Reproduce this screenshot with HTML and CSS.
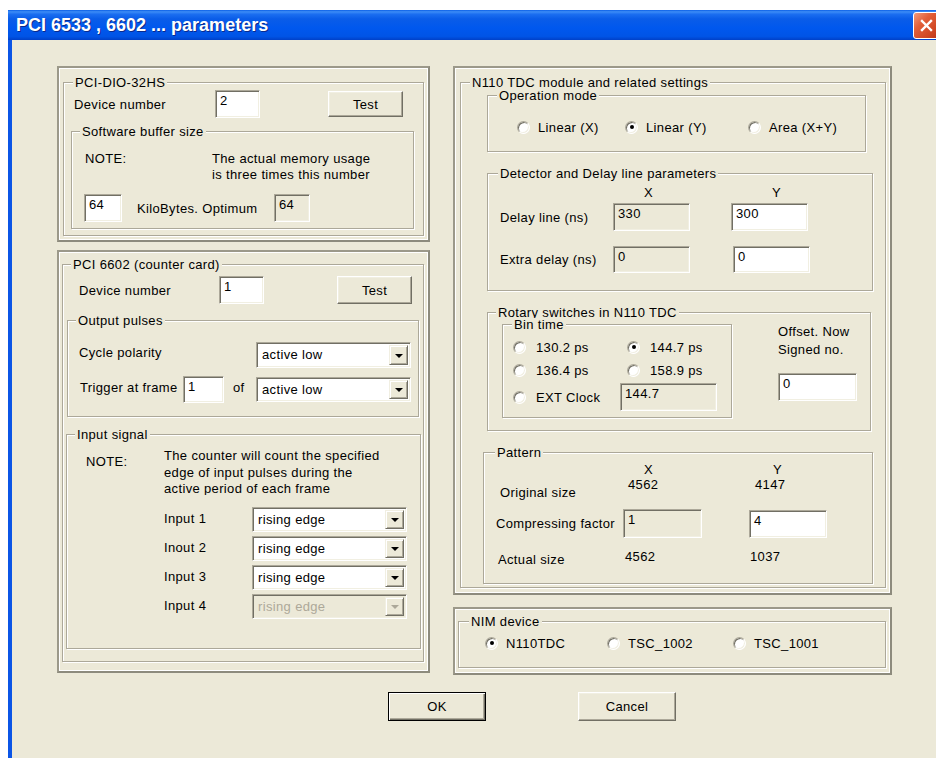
FILE: index.html
```html
<!DOCTYPE html>
<html lang="en">
<head>
<meta charset="utf-8">
<title>PCI 6533 , 6602 ... parameters</title>
<link rel="stylesheet" href="styles.css">
</head>
<body>
<div class="window">
  <div class="titlebar">
    <span class="title">PCI 6533 , 6602 ... parameters</span>
    <span class="close" role="button" aria-label="Close">
      <svg width="15" height="15" viewBox="0 0 15 15"><path d="M3 3L12 12M12 3L3 12" stroke="#fff" stroke-width="2.4" stroke-linecap="square"/></svg>
    </span>
  </div>

  <div class="client">
    <div class="columns">
      <!-- left column: digital I/O card and counter card -->
      <div class="col col-left">
        <div class="frame frame-dio">
          <div class="group g-dio">
            <div class="cap">PCI-DIO-32HS</div>
            <div class="row dio-dev">
              <span class="lbl">Device number</span>
              <span class="edit w45">2</span>
              <span class="btn dio-test">Test</span>
            </div>
            <div class="group g-buf">
              <div class="cap">Software buffer size</div>
              <div class="note buf-note">
                <span class="note-key">NOTE:</span>
                <span class="note-text">The actual memory usage<br>is three times this number</span>
              </div>
              <div class="row buf-row">
                <span class="edit buf-kb">64</span>
                <span class="lbl buf-lbl">KiloBytes. Optimum</span>
                <span class="edit ro buf-opt">64</span>
              </div>
            </div>
          </div>
        </div>

        <div class="frame frame-ctr">
          <div class="group g-ctr">
            <div class="cap">PCI 6602 (counter card)</div>
            <div class="row ctr-dev">
              <span class="lbl">Device number</span>
              <span class="edit w45">1</span>
              <span class="btn ctr-test">Test</span>
            </div>
            <div class="group g-out">
              <div class="cap">Output pulses</div>
              <div class="row out-pol">
                <span class="lbl">Cycle polarity</span>
                <div class="combo"><span class="val">active low</span><span class="drop"></span></div>
              </div>
              <div class="row out-trig">
                <span class="lbl">Trigger at frame</span>
                <span class="edit trig-edit">1</span>
                <span class="of">of</span>
                <div class="combo"><span class="val">active low</span><span class="drop"></span></div>
              </div>
            </div>
            <div class="group g-in">
              <div class="cap">Input signal</div>
              <div class="note in-note">
                <span class="note-key">NOTE:</span>
                <span class="note-text">The counter will count the specified<br>edge of input pulses during the<br>active period of each frame</span>
              </div>
              <div class="row in-row first">
                <span class="lbl">Input 1</span>
                <div class="combo"><span class="val">rising edge</span><span class="drop"></span></div>
              </div>
              <div class="row in-row">
                <span class="lbl">Inout 2</span>
                <div class="combo"><span class="val">rising edge</span><span class="drop"></span></div>
              </div>
              <div class="row in-row">
                <span class="lbl">Input 3</span>
                <div class="combo"><span class="val">rising edge</span><span class="drop"></span></div>
              </div>
              <div class="row in-row">
                <span class="lbl">Input 4</span>
                <div class="combo dis"><span class="val">rising edge</span><span class="drop"></span></div>
              </div>
            </div>
          </div>
        </div>
      </div>

      <!-- right column: TDC module and NIM device -->
      <div class="col col-right">
        <div class="frame frame-tdc">
          <div class="group g-tdc">
            <div class="cap">N110 TDC module and related settings</div>

            <div class="group g-mode">
              <div class="cap">Operation mode</div>
              <div class="radios mode-row">
                <span class="radio m1"><span class="rb"></span>Linear (X)</span>
                <span class="radio m2"><span class="rb on"></span>Linear (Y)</span>
                <span class="radio"><span class="rb"></span>Area (X+Y)</span>
              </div>
            </div>

            <div class="group g-det">
              <div class="cap">Detector and Delay line parameters</div>
              <div class="head det-head"><span class="hx">X</span><span>Y</span></div>
              <div class="row det-row det-row1">
                <span class="lbl">Delay line (ns)</span>
                <span class="edit ro">330</span>
                <span class="edit">300</span>
              </div>
              <div class="row det-row det-row2">
                <span class="lbl">Extra delay (ns)</span>
                <span class="edit ro">0</span>
                <span class="edit">0</span>
              </div>
            </div>

            <div class="group g-rot">
              <div class="cap">Rotary switches in N110 TDC</div>
              <div class="rot-body">
                <div class="group g-bin">
                  <div class="cap">Bin time</div>
                  <div class="radios bin-r1">
                    <span class="radio b1"><span class="rb"></span>130.2 ps</span>
                    <span class="radio"><span class="rb on"></span>144.7 ps</span>
                  </div>
                  <div class="radios bin-r2">
                    <span class="radio b1"><span class="rb"></span>136.4 ps</span>
                    <span class="radio"><span class="rb"></span>158.9 ps</span>
                  </div>
                  <div class="radios bin-r3">
                    <span class="radio b3"><span class="rb"></span>EXT Clock</span>
                    <span class="edit ro bin-ro">144.7</span>
                  </div>
                </div>
                <div class="offset">
                  <div class="offset-text">Offset. Now<br>Signed no.</div>
                  <span class="edit off-edit">0</span>
                </div>
              </div>
            </div>

            <div class="group g-pat">
              <div class="cap">Pattern</div>
              <div class="head pat-head"><span class="hx">X</span><span>Y</span></div>
              <div class="pat-line pat-orig">
                <span class="lbl">Original size</span>
                <span class="v1">4562</span>
                <span class="v2">4147</span>
              </div>
              <div class="row pat-comp">
                <span class="lbl">Compressing factor</span>
                <span class="edit ro">1</span>
                <span class="edit">4</span>
              </div>
              <div class="pat-line pat-act">
                <span class="lbl">Actual size</span>
                <span class="v1">4562</span>
                <span class="v2">1037</span>
              </div>
            </div>
          </div>
        </div>

        <div class="frame frame-nim">
          <div class="group g-nim">
            <div class="cap">NIM device</div>
            <div class="radios nim-row">
              <span class="radio n1"><span class="rb on"></span>N110TDC</span>
              <span class="radio n2"><span class="rb"></span>TSC_1002</span>
              <span class="radio"><span class="rb"></span>TSC_1001</span>
            </div>
          </div>
        </div>
      </div>
    </div>

    <div class="actions">
      <span class="btn default ok">OK</span>
      <span class="btn cancel">Cancel</span>
    </div>
  </div>
</div>
</body>
</html>
```

FILE: styles.css
```css
* { box-sizing: border-box; }

html, body {
  margin: 0;
  padding: 0;
  background: #fff;
  overflow: hidden;
}

body {
  width: 936px;
  height: 758px;
  font-family: "Liberation Sans", Arial, sans-serif;
  font-size: 13px;
  letter-spacing: 0.35px;
  color: #000;
}

/* ---------- window chrome ---------- */
.window {
  margin: 10px 0 0 8px;
  width: 936px;
  height: 748px;
  display: flex;
  flex-direction: column;
}

.titlebar {
  flex: none;
  height: 30px;
  display: flex;
  align-items: center;
  padding-left: 8px;
  background: linear-gradient(to bottom,
    #0a5fe6 0%, #3d8cf6 6%, #1b6ef0 14%, #0a5ce8 30%,
    #0058ee 60%, #0054e6 88%, #0040c8 100%);
}

.title {
  font-size: 18px;
  font-weight: bold;
  letter-spacing: 0;
  color: #fff;
  text-shadow: 1px 1px 0 #0b2a8c;
}

.close {
  margin-left: auto;
  margin-right: 4px;
  width: 27px;
  height: 27px;
  display: grid;
  place-items: center;
  border: 1px solid #fff;
  border-radius: 3px;
  background: linear-gradient(135deg, #f09a7c 0%, #e2603a 35%, #cf4622 75%, #b8351a 100%);
}

.client {
  flex: 1;
  background: #ece9d8;
  border-left: 4px solid #0b55e6;
  padding: 26px 0 0 45px;
}

.columns {
  display: flex;
  align-items: flex-start;
  gap: 23px;
}

.col { display: flex; flex-direction: column; }
.col-left { width: 373px; gap: 8px; }
.col-right { width: 439px; gap: 12px; }

/* ---------- panels and group boxes ---------- */
.frame {
  display: flex;
  flex-direction: column;
  border: 2px solid #8d8b7d;
  border-top-color: #9c998a;
  border-left-color: #9c998a;
  box-shadow: inset 1px 1px 0 #fff, inset -1px -1px 0 #fff;
}
.frame > .group { flex: 1; }

.frame-dio { height: 176px; padding: 14px 4px 4px 4px; }
.frame-ctr { height: 423px; padding: 12px 4px 9px 3px; }
.frame-tdc { height: 529px; padding: 14px 4px 5px 5px; }
.frame-nim { height: 68px;  padding: 12px 4px 5px 3px; }

.group {
  border: 1px solid #aca899;
  box-shadow: inset 1px 1px 0 #fff, 1px 1px 0 #fff;
}

/* caption sits on the group's top edge */
.cap {
  width: max-content;
  margin-top: -7px;
  padding: 0 2px;
  height: 13px;
  line-height: 13px;
  background: #ece9d8;
  position: relative;
}

.row { display: flex; align-items: center; }
.lbl { flex: none; white-space: nowrap; }

/* ---------- controls ---------- */
.edit {
  flex: none;
  display: block;
  height: 28px;
  padding: 1px 3px 0 4px;
  line-height: 17px;
  background: #fff;
  border: 1px solid;
  border-color: #aca899 #fff #fff #aca899;
  box-shadow: inset 1px 1px 0 #716f64, inset -1px -1px 0 #f1efe2;
}
.edit.ro { background: #ece9d8; }

.btn {
  flex: none;
  display: grid;
  place-items: center;
  background: #ece9d8;
  border: 1px solid;
  border-color: #fff #716f64 #716f64 #fff;
  box-shadow: inset -1px -1px 0 #aca899, inset 1px 1px 0 #f1efe2;
}
.btn.default {
  border: 1px solid #000;
  box-shadow: inset 1px 1px 0 #fff, inset -1px -1px 0 #716f64, inset -2px -2px 0 #aca899;
}

.combo {
  flex: none;
  display: flex;
  width: 155px;
  height: 25px;
  padding: 2px;
  background: #fff;
  border: 1px solid;
  border-color: #aca899 #fff #fff #aca899;
  box-shadow: inset 1px 1px 0 #716f64, inset -1px -1px 0 #f1efe2;
}
.combo .val {
  flex: 1;
  padding-left: 3px;
  line-height: 19px;
  white-space: nowrap;
}
.combo .drop {
  width: 19px;
  display: grid;
  place-items: center;
  background: #ece9d8;
  border: 1px solid;
  border-color: #f1efe2 #716f64 #716f64 #f1efe2;
  box-shadow: inset 1px 1px 0 #fff, inset -1px -1px 0 #aca899;
}
.combo .drop::after {
  content: "";
  border-left: 4px solid transparent;
  border-right: 4px solid transparent;
  border-top: 4px solid #000;
  margin-top: 1px;
}
.combo.dis { background: #ece9d8; color: #aca899; }
.combo.dis .drop::after { border-top-color: #aca899; }

.radios { display: flex; align-items: center; }
.radio {
  flex: none;
  display: flex;
  align-items: center;
  gap: 8px;
  height: 16px;
  white-space: nowrap;
}
.rb {
  flex: none;
  width: 13px;
  height: 13px;
  display: grid;
  place-items: center;
  border-radius: 50%;
  background: #fff;
  border: 1px solid;
  border-color: #aca899 #fff #fff #aca899;
  box-shadow: inset 1px 1px 0 #716f64, inset -1px -1px 0 #f1efe2;
}
.rb.on::after {
  content: "";
  width: 4px;
  height: 4px;
  border-radius: 50%;
  background: #000;
}

.note { display: flex; line-height: 16px; }
.note-key { flex: none; }

/* ---------- PCI-DIO-32HS ---------- */
.g-dio > .cap { margin-left: 9px; }
.dio-dev { margin-top: 1px; height: 28px; }
.dio-dev .lbl { margin-left: 10px; width: 141px; }
.w45 { width: 45px; }
.dio-test { margin-left: 68px; width: 75px; height: 26px; }

.g-buf { margin: 13px 0 0 7px; width: 343px; padding-bottom: 6px; }
.g-buf > .cap { margin-left: 8px; }
.buf-note { margin-top: 13px; }
.buf-note .note-key { margin-left: 13px; width: 127px; }
.buf-row { margin-top: 11px; height: 28px; }
.buf-kb { margin-left: 12px; width: 38px; }
.buf-lbl { margin-left: 15px; width: 137px; }
.buf-opt { width: 36px; }

/* ---------- PCI 6602 ---------- */
.g-ctr > .cap { margin-left: 8px; }
.ctr-dev { margin-top: 5px; height: 28px; }
.ctr-dev .lbl { margin-left: 16px; width: 140px; }
.ctr-test { margin-left: 73px; width: 75px; height: 28px; }

.g-out { margin: 16px 0 0 4px; width: 352px; padding-bottom: 13px; }
.g-out > .cap { margin-left: 8px; }
.out-pol { margin-top: 15px; height: 26px; }
.out-pol .lbl { margin-left: 11px; width: 177px; margin-bottom: 6px; }
.out-pol .combo { height: 26px; }
.out-trig { margin-top: 7px; height: 28px; }
.out-trig .lbl { margin-left: 12px; width: 103px; margin-bottom: 3px; }
.trig-edit { width: 41px; height: 27px; }
.of { flex: none; margin-left: 9px; width: 23px; margin-bottom: 3px; }

.g-in { margin: 17px 0 0 3px; width: 355px; padding-bottom: 29px; }
.g-in > .cap { margin-left: 8px; }
.in-note { margin-top: 7px; height: 47px; overflow: hidden; }
.in-note .note-key { margin: 6px 0 0 19px; width: 78px; }
.in-note .note-text { line-height: 16.5px; }
.in-row { margin-top: 4px; height: 25px; }
.in-row.first { margin-top: 12px; }
.in-row .lbl { margin-left: 97px; width: 88px; margin-bottom: 2px; }

/* ---------- N110 TDC ---------- */
.g-tdc > .cap { margin-left: 9px; }

.g-mode { margin: 6px 0 0 26px; width: 379px; padding-bottom: 16px; }
.g-mode > .cap { margin-left: 9px; }
.mode-row { margin-top: 17px; height: 16px; }
.m1 { margin-left: 29px; width: 108px; }
.m2 { width: 123px; }

.head { display: flex; height: 16px; line-height: 16px; }

.g-det { margin: 21px 0 0 26px; width: 386px; padding-bottom: 17px; }
.g-det > .cap { margin-left: 10px; }
.det-head { margin-top: 5px; }
.det-head .hx { margin-left: 156px; width: 128px; }
.det-row .lbl { margin-left: 12px; width: 113px; }
.det-row .edit { width: 77px; height: 100%; }
.det-row1 { margin-top: 2px; height: 28px; }
.det-row1 .edit:last-child { margin-left: 41px; }
.det-row2 { margin-top: 15px; height: 27px; }
.det-row2 .edit:last-child { margin-left: 43px; }

.g-rot { margin: 21px 0 0 26px; width: 384px; padding-bottom: 12px; }
.g-rot > .cap { margin-left: 8px; }
.rot-body { display: flex; align-items: flex-start; }
.g-bin { flex: none; margin: 5px 0 0 14px; width: 230px; padding-bottom: 6px; }
.g-bin > .cap { margin-left: 9px; }
.g-bin .radio { gap: 10px; }
.bin-r1 { margin-top: 8px; height: 16px; }
.bin-r2 { margin-top: 7px; height: 16px; }
.bin-r3 { margin-top: 5px; height: 28px; }
.b1 { margin-left: 10px; width: 114px; }
.b3 { margin-left: 10px; width: 107px; }
.bin-ro { width: 97px; }
.offset { margin: 4px 0 0 46px; }
.offset-text { line-height: 18px; white-space: nowrap; }
.off-edit { margin-top: 14px; width: 79px; }

.g-pat { margin: 21px 0 0 22px; width: 390px; padding-bottom: 15px; }
.g-pat > .cap { margin-left: 11px; }
.pat-head { margin-top: 3px; }
.pat-head .hx { margin-left: 160px; width: 129px; }
.pat-line { display: flex; line-height: 16px; }
.pat-line .lbl { align-self: flex-end; }
.pat-line .v1, .pat-line .v2 { align-self: flex-start; }
.pat-orig { margin-top: -1px; height: 24px; }
.pat-orig .lbl { margin-left: 16px; width: 128px; }
.pat-orig .v1 { width: 127px; }
.pat-comp { margin-top: 8px; height: 29px; }
.pat-comp .lbl { margin-left: 12px; width: 127px; }
.pat-comp .ro { width: 79px; height: 29px; }
.pat-comp .edit:last-child { margin-left: 47px; width: 78px; height: 28px; }
.pat-act { margin-top: 11px; height: 19px; }
.pat-act .lbl { margin-left: 14px; width: 127px; }
.pat-act .v1 { width: 125px; }

/* ---------- NIM device ---------- */
.g-nim > .cap { margin-left: 10px; }
.nim-row { margin-top: 7px; height: 16px; }
.n1 { margin-left: 26px; width: 122px; }
.n2 { width: 126px; }

/* ---------- dialog buttons ---------- */
.actions { display: flex; margin-top: 17px; }
.ok { margin-left: 331px; width: 98px; height: 29px; }
.cancel { margin-left: 92px; width: 98px; height: 29px; }
```
